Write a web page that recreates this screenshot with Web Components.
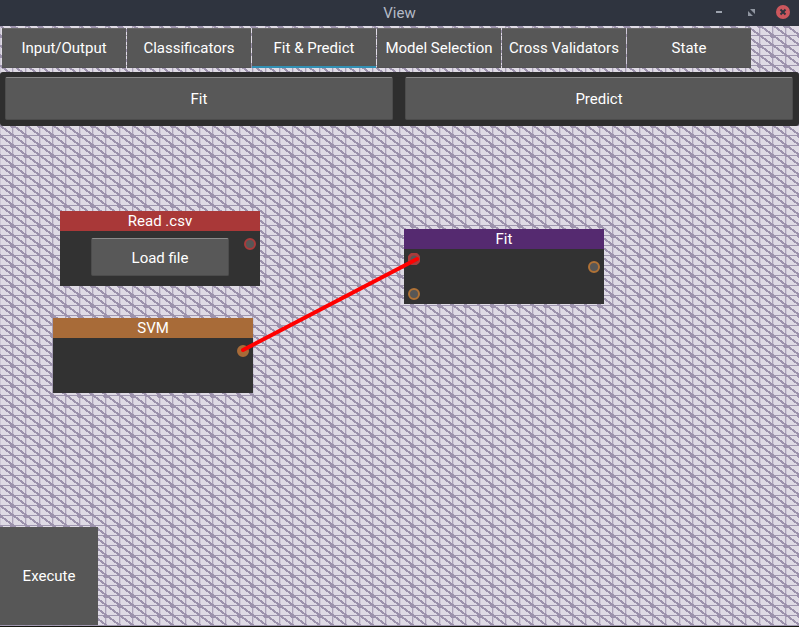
<!DOCTYPE html>
<html lang="en">
<head>
<meta charset="utf-8">
<title>View</title>
<style>
html, body { height: 100%; margin: 0; }
body { font: 15px/20px Roboto, "Liberation Sans", sans-serif; color: #fff; overflow: hidden; }
</style>
</head>
<body>
<app-window heading="View">
  <tab-strip slot="tabs">
    <tab-item>Input/Output</tab-item>
    <tab-item>Classificators</tab-item>
    <tab-item active>Fit &amp; Predict</tab-item>
    <tab-item>Model Selection</tab-item>
    <tab-item>Cross Validators</tab-item>
    <tab-item>State</tab-item>
  </tab-strip>
  <tool-panel slot="tools">
    <push-button>Fit</push-button>
    <push-button>Predict</push-button>
  </tool-panel>
  <graph-node heading="Read .csv" x="60" y="211" color="#a93838">
    <push-button>Load file</push-button>
    <node-port slot="ports" color="#a93b3b" x="184" y="27"></node-port>
  </graph-node>
  <graph-node heading="SVM" x="53" y="318" color="#a86b38">
    <node-port slot="ports" color="#a86b38" linked x="184" y="27"></node-port>
  </graph-node>
  <graph-node heading="Fit" x="404" y="229" color="#552a70">
    <node-port slot="ports" color="#a93b3b" x="4" y="24" wide></node-port>
    <node-port slot="ports" color="#b07236" x="4" y="59"></node-port>
    <node-port slot="ports" color="#b07236" x="184" y="32"></node-port>
  </graph-node>
  <node-link x1="243" y1="350" x2="417" y2="259"></node-link>
  <run-button slot="run">Execute</run-button>
</app-window>

<script>
function define(name, html, setup) {
  const template = document.createElement('template');
  template.innerHTML = html;
  customElements.define(name, class extends HTMLElement {
    connectedCallback() {
      if (this.shadowRoot) return;
      this.attachShadow({ mode: 'open' }).append(template.content.cloneNode(true));
      if (setup) setup(this, this.shadowRoot);
    }
  });
}

function place(host) {
  host.style.left = host.getAttribute('x') + 'px';
  host.style.top = host.getAttribute('y') + 'px';
}

define('mesh-backdrop', `
<style>
:host { display: block; position: absolute; inset: 0; background: #dfdbe5; }
svg { display: block; width: 100%; height: 100%; }
</style>
<svg aria-hidden="true" shape-rendering="crispEdges">
  <defs><pattern id="mesh" y="-6" width="80" height="20" patternUnits="userSpaceOnUse"></pattern></defs>
  <rect width="100%" height="100%" fill="url(#mesh)"/>
</svg>`, (host, root) => {
  const step = 80 / 6;
  let grid = '';
  let soft = '';
  let slopes = '';
  let knots = '';
  for (let i = 0; i <= 6; i++) {
    const x = Math.floor(i * step);
    grid += `M${x - 0.5} 0V20`;
    soft += `M${x + 0.5} 0V20`;
    const y = i % 2 ? 4 : 14;
    knots += `M${x - 2} ${y}h3v1h1v3h-4v-1h-1v-2h1z`;
  }
  for (let k = -7; k <= 2; k++) slopes += `M-4 ${2.5 + 10 * k}L84 ${68.5 + 10 * k}`;
  root.querySelector('pattern').innerHTML =
    `<path d="${soft}" stroke="#cec8d7"/><path d="${grid}" stroke="#aaa1b8"/>` +
    `<path d="M0 5.5H80M0 15.5H80" stroke="#a097b0"/>` +
    `<path d="${slopes}" stroke="#9c92ac" stroke-width="2"/><path d="${knots}" fill="#9c92ac"/>`;
});

define('app-window', `
<style>
:host { display: flex; flex-direction: column; height: 100%; position: relative; }
header { flex: none; height: 26px; background: #2f343f; display: grid; grid-template-columns: 1fr auto 1fr; align-items: center; color: #b4bac6; z-index: 1; }
h1 { grid-column: 2; margin: 0; font: inherit; line-height: 24px; }
.controls { display: flex; justify-content: flex-end; gap: 16px; padding-right: 8px; }
.controls button { border: 0; padding: 0; width: 16px; height: 16px; background: none; }
svg { display: block; }
main { flex: 1; display: flex; flex-direction: column; position: relative; border-bottom: 1px solid #15180f; }
.layer { position: relative; }
.foot { margin-top: auto; padding-bottom: 1px; }
.canvas { position: absolute; inset: 0; pointer-events: none; }
</style>
<header>
  <h1></h1>
  <div class="controls">
    <button aria-label="Minimize"><svg width="16" height="16"><path d="M5 6h6v2H5z" fill="#9da3ae"/></svg></button>
    <button aria-label="Maximize"><svg width="16" height="16"><path d="M7 4h5v5zM5 6v5h5z" fill="#9096a1"/></svg></button>
    <button aria-label="Close"><svg width="16" height="16"><circle cx="8" cy="7" r="7" fill="#cc575d"/><path d="M5.500 4.500l5 5m0-5l-5 5" stroke="#2f343f" stroke-width="2"/></svg></button>
  </div>
</header>
<main>
  <mesh-backdrop></mesh-backdrop>
  <div class="layer"><slot name="tabs"></slot></div>
  <div class="layer"><slot name="tools"></slot></div>
  <div class="layer foot"><slot name="run"></slot></div>
</main>
<div class="canvas"><slot></slot></div>`, (host, root) => {
  root.querySelector('h1').textContent = host.getAttribute('heading');
});

define('tab-strip', `
<style>
:host { display: block; padding: 2px 48px 4px 2px; }
nav { display: grid; grid-template-columns: repeat(6, 1fr); gap: 1px; }
</style>
<nav><slot></slot></nav>`);

define('tab-item', `
<style>
:host { display: block; min-width: 0; }
button { display: block; width: 100%; height: 40px; padding: 0; border: 0; border-top: 1px solid #686767; border-bottom: 1px solid #525252; background: #575757; color: inherit; font: inherit; white-space: nowrap; }
:host([active]) button { border-bottom: 2px solid #3290b4; padding-top: 1px; }
</style>
<button><slot></slot></button>`);

define('push-button', `
<style>
:host { display: block; }
button { display: block; width: 100%; height: var(--button-height, 43px); padding: 1px 0 0; border: 1px solid #4c4c4c; border-top-color: #8b8b8b; border-radius: 2px; background: #585858; color: inherit; font: inherit; pointer-events: auto; }
</style>
<button><slot></slot></button>`);

define('tool-panel', `
<style>
:host { display: grid; grid-template-columns: 1fr 1fr; gap: 12px; padding: 5px 6px 6px 5px; background: #2e2e2e; border-radius: 3px; }
</style>
<slot></slot>`);

define('run-button', `
<style>
:host { display: block; width: 98px; }
button { display: block; width: 100%; height: 98px; padding: 0; border: 0; background: #575757; color: inherit; font: inherit; }
</style>
<button><slot></slot></button>`);

define('graph-node', `
<style>
:host { display: block; position: absolute; width: 200px; background: #323232; --button-height: 38px; }
h2 { margin: 0; font: inherit; text-align: center; background: var(--title); }
.body { min-height: 41px; padding: 7px 31px; }
.body ::slotted(push-button) { height: 37px; }
</style>
<h2></h2><div class="body"><slot></slot></div><slot name="ports"></slot>`, (host, root) => {
  place(host);
  root.querySelector('h2').textContent = host.getAttribute('heading');
  host.style.setProperty('--title', host.getAttribute('color'));
});

define('node-port', `
<style>
:host { display: block; position: absolute; }
svg { display: block; }
circle { fill: #575757; stroke: var(--ring); stroke-width: 2; }
:host([wide]) circle { stroke-width: 3; }
:host([linked]) circle { fill: var(--ring); }
</style>
<svg width="12" height="12"><circle cx="6" cy="6" r="5"/></svg>`, host => {
  place(host);
  host.style.setProperty('--ring', host.getAttribute('color'));
});

define('node-link', `
<style>
:host { display: block; position: absolute; inset: 0; }
svg { display: block; width: 100%; height: 100%; }
line { stroke: #f00; stroke-width: 4; stroke-linecap: round; }
</style>
<svg aria-hidden="true"><line/></svg>`, (host, root) => {
  for (const n of ['x1', 'y1', 'x2', 'y2']) root.querySelector('line').setAttribute(n, host.getAttribute(n));
});
</script>
</body>
</html>
